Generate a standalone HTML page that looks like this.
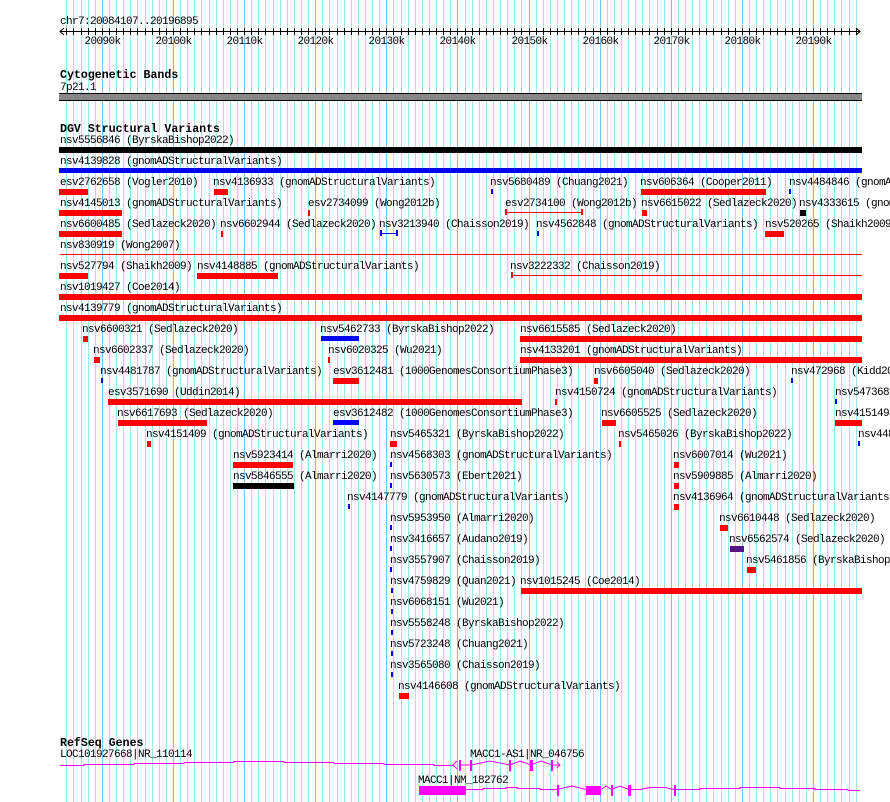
<!DOCTYPE html>
<html><head><meta charset="utf-8">
<style>
html,body{margin:0;padding:0;background:#fff;width:890px;height:802px;overflow:hidden}
svg{display:block}
svg text{font-family:"Liberation Mono","DejaVu Sans Mono",monospace;font-size:11px;letter-spacing:-0.6px;fill:#000}
svg text.b{font-weight:bold;font-size:11.6px;letter-spacing:0}
</style></head><body>
<svg id="s" width="890" height="802" xmlns="http://www.w3.org/2000/svg" shape-rendering="crispEdges"></svg>
<script>
var S=document.getElementById('s'),h='';
function X(p){return 60+(p-20084107)*802/112788;}
for(var k=20085;k<=20196;k++){var x=X(k*1000);var maj=(k%10==0);
 h+='<rect x="'+Math.round(x)+'" y="0" width="1" height="802" fill="'+(maj?'#80c0ec':'#a4e4ee')+'"/>';}
h+='<text x="60" y="24">chr7:20084107..20196895</text>';
h+='<rect x="60" y="31" width="800" height="1" fill="#000"/>';
h+='<path d="M64 28 L60 31.5 L64 35 M856 28 L860 31.5 L856 35" stroke="#000" fill="none" shape-rendering="auto"/>';
for(var k=20085;k<=20196;k++){var x=Math.round(X(k*1000));
 h+='<rect x="'+x+'" y="28" width="1" height="7" fill="#000"/>';
 if(k%10==0)h+='<text x="'+(x+0.5)+'" y="44" text-anchor="middle">'+k/1+'k</text>';}
h+='<text class="b" x="60" y="78">Cytogenetic Bands</text><text x="60" y="90">7p21.1</text>';
h+='<rect x="59" y="93" width="803" height="8" fill="#000"/><rect x="59" y="94" width="803" height="6" fill="#888"/>';
h+='<text class="b" x="60" y="132">DGV Structural Variants</text>';
var R='#f00',B='#00f',K='#000',P='#55138c';
var F=[
[147,[[59,862,K,'nsv5556846 (ByrskaBishop2022)',60]]],
[168,[[59,862,B,'nsv4139828 (gnomADStructuralVariants)',60]]],
[189,[[59,88,R,'esv2762658 (Vogler2010)',60],[214,228,R,'nsv4136933 (gnomADStructuralVariants)',213],[491,493,B,'nsv5680489 (Chuang2021)',490],[641,766,R,'nsv606364 (Cooper2011)',640],[789,791,B,'nsv4484846 (gnomADStructuralVariants)',789]]],
[210,[[59,122,R,'nsv4145013 (gnomADStructuralVariants)',60],[308,310,R,'esv2734099 (Wong2012b)',308],[505,582,R,'esv2734100 (Wong2012b)',505,1],[642,647,R,'nsv6615022 (Sedlazeck2020)',641],[800,806,K,'nsv4333615 (gnomADStructuralVariants)',799]]],
[231,[[59,122,R,'nsv6600485 (Sedlazeck2020)',60],[221,223,R,'nsv6602944 (Sedlazeck2020)',220],[380,397,B,'nsv3213940 (Chaisson2019)',379,1],[537,539,B,'nsv4562848 (gnomADStructuralVariants)',536],[765,784,R,'nsv520265 (Shaikh2009)',765]]],
[252,[[60,862,R,'nsv830919 (Wong2007)',60,2]]],
[273,[[59,88,R,'nsv527794 (Shaikh2009)',60],[197,278,R,'nsv4148885 (gnomADStructuralVariants)',197],[511,862,R,'nsv3222332 (Chaisson2019)',510,3]]],
[294,[[59,862,R,'nsv1019427 (Coe2014)',60]]],
[315,[[59,862,R,'nsv4139779 (gnomADStructuralVariants)',60]]],
[336,[[83,88,R,'nsv6600321 (Sedlazeck2020)',82],[321,359,B,'nsv5462733 (ByrskaBishop2022)',320],[520,862,R,'nsv6615585 (Sedlazeck2020)',520]]],
[357,[[94,100,R,'nsv6602337 (Sedlazeck2020)',93],[328,330,R,'nsv6020325 (Wu2021)',328],[520,862,R,'nsv4133201 (gnomADStructuralVariants)',520]]],
[378,[[101,103,B,'nsv4481787 (gnomADStructuralVariants)',100],[333,359,R,'esv3612481 (1000GenomesConsortiumPhase3)',333],[594,598,R,'nsv6605040 (Sedlazeck2020)',594],[791,793,B,'nsv472968 (Kidd2010)',791]]],
[399,[[108,522,R,'esv3571690 (Uddin2014)',108],[555,557,R,'nsv4150724 (gnomADStructuralVariants)',555],[835,837,B,'nsv5473682 (Sudmant2015)',835]]],
[420,[[118,207,R,'nsv6617693 (Sedlazeck2020)',117],[333,359,B,'esv3612482 (1000GenomesConsortiumPhase3)',333],[602,616,R,'nsv6605525 (Sedlazeck2020)',601],[835,862,R,'nsv4151498 (gnomADStructuralVariants)',835]]],
[441,[[147,151,R,'nsv4151409 (gnomADStructuralVariants)',146],[390,397,R,'nsv5465321 (ByrskaBishop2022)',390],[619,621,R,'nsv5465026 (ByrskaBishop2022)',618],[858,860,B,'nsv4480000 (gnomAD)',858]]],
[462,[[233,293,R,'nsv5923414 (Almarri2020)',233],[390,392,B,'nsv4568303 (gnomADStructuralVariants)',390],[674,679,R,'nsv6007014 (Wu2021)',673]]],
[483,[[233,294,K,'nsv5846555 (Almarri2020)',233],[390,392,B,'nsv5630573 (Ebert2021)',390],[674,679,R,'nsv5909885 (Almarri2020)',673]]],
[504,[[348,350,B,'nsv4147779 (gnomADStructuralVariants)',347],[674,679,R,'nsv4136964 (gnomADStructuralVariants)',673]]],
[525,[[390,392,B,'nsv5953950 (Almarri2020)',390],[720,728,R,'nsv6610448 (Sedlazeck2020)',719]]],
[546,[[390,392,B,'nsv3416657 (Audano2019)',390],[730,744,P,'nsv6562574 (Sedlazeck2020)',729]]],
[567,[[390,392,B,'nsv3557907 (Chaisson2019)',390],[747,756,R,'nsv5461856 (ByrskaBishop2022)',746]]],
[588,[[391,393,B,'nsv4759829 (Quan2021)',390],[521,862,R,'nsv1015245 (Coe2014)',520]]],
[609,[[391,393,B,'nsv6068151 (Wu2021)',390]]],
[630,[[391,393,B,'nsv5558248 (ByrskaBishop2022)',390]]],
[651,[[391,393,B,'nsv5723248 (Chuang2021)',390]]],
[672,[[391,393,B,'nsv3565080 (Chaisson2019)',390]]],
[693,[[399,409,R,'nsv4146608 (gnomADStructuralVariants)',398]]]
];
F.forEach(function(r){var y=r[0];r[1].forEach(function(f){
 h+='<text x="'+f[4]+'" y="'+(y-4)+'">'+f[3]+'</text>';
 var t=f[5]||0;
 if(t==0){var bh=(f[2]==B?5:6);h+='<rect x="'+f[0]+'" y="'+y+'" width="'+(f[1]-f[0])+'" height="'+bh+'" fill="'+f[2]+'"/>';}
 else if(t==2){h+='<rect x="'+f[0]+'" y="'+(y+2)+'" width="'+(f[1]-f[0])+'" height="1" fill="'+f[2]+'"/>';}
 else{h+='<rect x="'+f[0]+'" y="'+(y+2)+'" width="'+(f[1]-f[0])+'" height="1" fill="'+f[2]+'"/>';
  h+='<rect x="'+f[0]+'" y="'+(y-1)+'" width="2" height="6" fill="'+f[2]+'"/>';
  if(t==1)h+='<rect x="'+(f[1]-1)+'" y="'+(y-1)+'" width="2" height="6" fill="'+f[2]+'"/>';}
});});
var M='#ff00ff';
h+='<text class="b" x="60" y="746">RefSeq Genes</text>';
h+='<text x="60" y="757">LOC101927668|NR_110114</text>';
h+='<text x="470" y="757">MACC1-AS1|NR_046756</text>';
h+='<text x="418" y="783">MACC1|NM_182762</text>';
h+='<g stroke="'+M+'" fill="none" stroke-width="1" shape-rendering="auto">';
h+='<path d="M60 765.5 H84 V764.5 H134 V763.5 H184 V762.5 H234 V761.5 H284 V762.5 H334 V763.5 H384 V764.5 H434 V765.5 H453"/>';
h+='<path d="M457 761 L453 765 L457 769"/>';
h+='<path d="M460 765 L471 765 L490 761 L510 765 L520 761 L531 765 L541 761 L552 765 L560 765 M557 762 L560 765 L557 768"/>';
h+='<path d="M466 789.5 H483 V788.5 H506 V787.5 H517 V788.5 H540 V789.5 H557 L572 786 L586 789.5 M601 789.5 L606 786 L612 789.5 L620 786 L629 789.5 H640 L650 787.5 H665 L674 789.5 H700 V788.5 H740 V787.5 H780 V788.5 H815 V789.5 H848 V790.5 H860"/>';
h+='</g>';
h+='<rect x="459" y="760" width="2" height="11" fill="'+M+'"/><rect x="470" y="760" width="2" height="11" fill="'+M+'"/><rect x="509" y="760" width="2" height="11" fill="'+M+'"/><rect x="530" y="760" width="3" height="11" fill="'+M+'"/><rect x="551" y="760" width="2" height="11" fill="'+M+'"/>';
h+='<rect x="419" y="786" width="47" height="9" fill="'+M+'"/><rect x="586" y="786" width="15" height="9" fill="'+M+'"/>';
h+='<rect x="557" y="785" width="2" height="11" fill="'+M+'"/><rect x="611" y="785" width="2" height="11" fill="'+M+'"/><rect x="628" y="785" width="3" height="11" fill="'+M+'"/><rect x="674" y="785" width="2" height="11" fill="'+M+'"/>';
S.innerHTML=h;
</script>
</body></html>
